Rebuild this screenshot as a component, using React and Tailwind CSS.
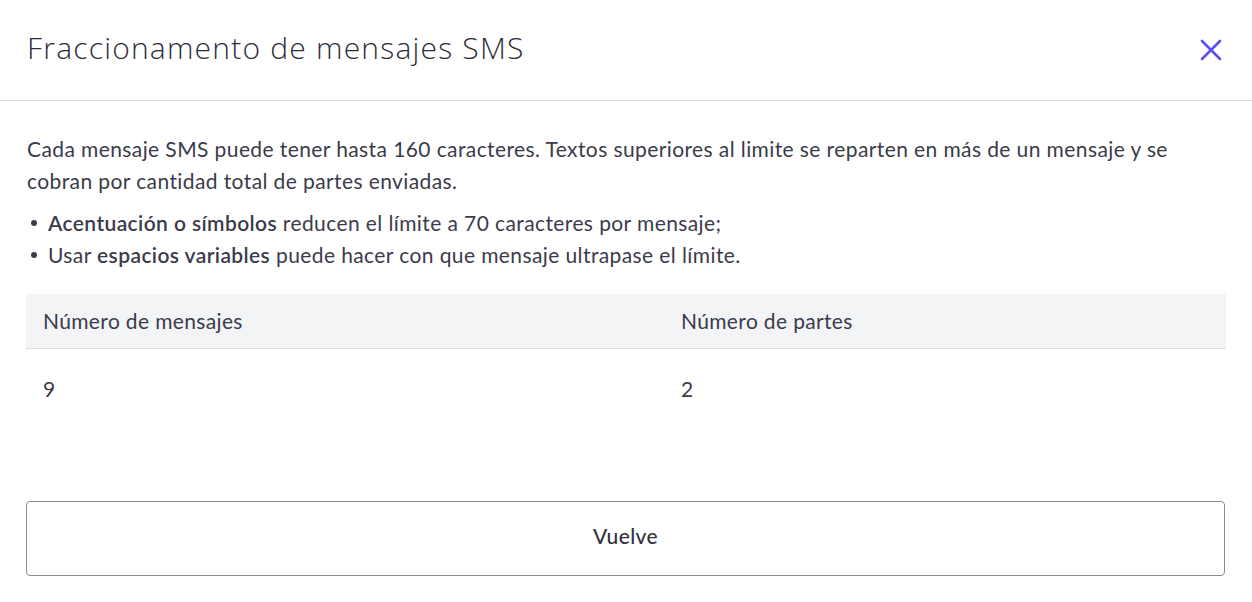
export default function App() {
  const body = { fontFamily: 'Lato, "Noto Sans", sans-serif' };
  return (
    <div className="w-[1252px] h-[602px] bg-white text-[#3b3b4a]" style={body}>
      <div className="h-[101px] border-b border-[#dcdce2] flex items-center justify-between pl-[27px] pr-[30px] pb-[6px]">
        <h1 className="text-[30px] font-light text-[#2e2e3a] tracking-[1.2px]" style={{ fontFamily: '"Open Sans", sans-serif' }}>
          Fraccionamento de mensajes SMS
        </h1>
        <button className="w-[22px] h-[22px] flex items-center justify-center mt-[6px]">
          <svg width="22" height="22" viewBox="0 0 22 22" fill="none" stroke="#5a50f2" strokeWidth="2.6" strokeLinecap="round">
            <path d="M2 2L20 20M20 2L2 20" />
          </svg>
        </button>
      </div>
      <div className="px-[26px] pt-[32px]">
        <p className="text-[21px] leading-[32px] pl-[1px] tracking-[0.4px]">
          Cada mensaje SMS puede tener hasta 160 caracteres. Textos superiores al limite se reparten en más de un mensaje y se cobran por cantidad total de partes enviadas.
        </p>
        <ul className="mt-[10px] text-[21px] leading-[32px] pl-[1px] tracking-[0.4px]">
          <li className="flex items-center">
            <span className="w-[6px] h-[6px] rounded-full bg-[#3b3b4a] ml-[4px] mr-[11px]"></span>
            <span><b className="font-semibold">Acentuación o símbolos</b> reducen el límite a 70 caracteres por mensaje;</span>
          </li>
          <li className="flex items-center">
            <span className="w-[6px] h-[6px] rounded-full bg-[#3b3b4a] ml-[4px] mr-[11px]"></span>
            <span>Usar <b className="font-semibold">espacios variables</b> puede hacer con que mensaje ultrapase el límite.</span>
          </li>
        </ul>
        <div className="mt-[23px] tracking-[0.35px]">
          <div className="grid grid-cols-[638px_1fr] h-[55px] bg-[#f3f4f6] border-b border-[#dcdce2] items-center text-[21px]">
            <div className="pl-[17px]">Número de mensajes</div>
            <div className="pl-[17px]">Número de partes</div>
          </div>
          <div className="grid grid-cols-[638px_1fr] h-[80px] items-center text-[21px]">
            <div className="pl-[17px]">9</div>
            <div className="pl-[17px]">2</div>
          </div>
        </div>
        <button className="mt-[72px] w-[1199px] h-[75px] border border-[#8a8a96] rounded-[4px] flex items-center justify-center pb-[5px] text-[21px] font-medium text-[#333340] tracking-[0.35px]">
          Vuelve
        </button>
      </div>
    </div>
  );
}
